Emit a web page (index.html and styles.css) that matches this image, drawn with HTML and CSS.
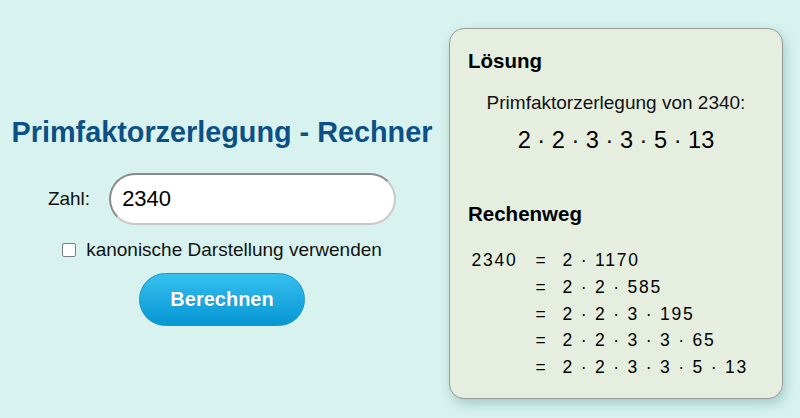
FILE: index.html
```html
<!DOCTYPE html>
<html lang="de">
<head>
<meta charset="utf-8">
<title>Primfaktorzerlegung - Rechner</title>
<link rel="stylesheet" href="styles.css">
</head>
<body>
<div class="page">
  <div class="calc">
    <h1 class="title">Primfaktorzerlegung - Rechner</h1>
    <div class="input-row">
      <label class="label" for="zahl">Zahl:</label>
      <input class="number" id="zahl" type="text" value="2340">
    </div>
    <label class="check-row">
      <input class="check" type="checkbox">
      <span>kanonische Darstellung verwenden</span>
    </label>
    <button class="btn" type="button">Berechnen</button>
  </div>
  <div class="panel">
    <div class="heading">Lösung</div>
    <div class="result-caption">Primfaktorzerlegung von 2340:</div>
    <div class="result">2 · 2 · 3 · 3 · 5 · 13</div>
    <div class="heading heading-steps">Rechenweg</div>
    <div class="steps">
      <span>2340</span><span>=</span><span>2 · 1170</span>
      <span></span><span>=</span><span>2 · 2 · 585</span>
      <span></span><span>=</span><span>2 · 2 · 3 · 195</span>
      <span></span><span>=</span><span>2 · 2 · 3 · 3 · 65</span>
      <span></span><span>=</span><span>2 · 2 · 3 · 3 · 5 · 13</span>
    </div>
  </div>
</div>
</body>
</html>
```
FILE: styles.css
```css
html, body {
  margin: 0;
  padding: 0;
  background: #d8f3ef;
  font-family: "Liberation Sans", Arial, sans-serif;
  color: #111;
}

.page {
  display: flex;
  align-items: flex-start;
  height: 418px;
  overflow: hidden;
}

.calc {
  width: 444px;
  padding-top: 115px;
  display: flex;
  flex-direction: column;
  align-items: center;
}

.title {
  margin: 0;
  font-size: 28.8px;
  line-height: 34px;
  font-weight: bold;
  color: #0c5085;
  white-space: nowrap;
}

.input-row {
  margin-top: 24px;
  display: flex;
  align-items: center;
  gap: 19px;
}

.label {
  font-size: 19px;
  line-height: 24px;
}

.number {
  box-sizing: border-box;
  width: 287px;
  height: 52px;
  margin: 0;
  padding: 0 10px 0 11px;
  border: 2px solid;
  border-color: #8a8a8a #c9c9c9 #c9c9c9 #8a8a8a;
  border-radius: 26px;
  background: #fff;
  font-family: "Liberation Sans", Arial, sans-serif;
  font-size: 22px;
  color: #000;
  outline: none;
}

.check-row {
  margin-top: 13px;
  display: flex;
  align-items: center;
  gap: 10px;
  font-size: 19px;
  line-height: 24px;
}

.check {
  -webkit-appearance: none;
  appearance: none;
  box-sizing: border-box;
  width: 14px;
  height: 14px;
  margin: 0;
  border: 1.5px solid #7c7c84;
  border-radius: 2px;
  background: #fff;
}

.btn {
  margin-top: 11px;
  box-sizing: border-box;
  width: 166px;
  height: 53px;
  border: 1px solid #1b93cc;
  border-radius: 27px;
  background: linear-gradient(#37c0f0, #0596d3);
  color: #fff;
  font-family: "Liberation Sans", Arial, sans-serif;
  font-size: 20px;
  font-weight: bold;
  text-shadow: 0 0 1px rgba(0, 40, 80, 0.35);
  padding: 0;
}

.panel {
  margin-top: 28px;
  margin-left: 5px;
  width: 334px;
  box-sizing: border-box;
  padding: 20px 18px 17.5px 18px;
  background: #e6efdf;
  border: 1px solid #999;
  border-radius: 15px;
  box-shadow: 2px 5px 12px rgba(20, 80, 80, 0.25);
}

.heading {
  font-size: 20.5px;
  line-height: 24px;
  font-weight: bold;
  color: #000;
}

.result-caption {
  margin-top: 18px;
  text-align: center;
  font-size: 19px;
  line-height: 24px;
}

.result {
  margin-top: 11px;
  text-align: center;
  font-size: 23.6px;
  line-height: 28px;
  color: #000;
}

.heading-steps {
  margin-top: 48px;
}

.steps {
  margin-top: 21.2px;
  margin-left: 3.5px;
  display: grid;
  grid-template-columns: 64px 27px auto;
  font-size: 17.5px;
  line-height: 26.7px;
  letter-spacing: 1.8px;
  white-space: nowrap;
  color: #000;
}
```
